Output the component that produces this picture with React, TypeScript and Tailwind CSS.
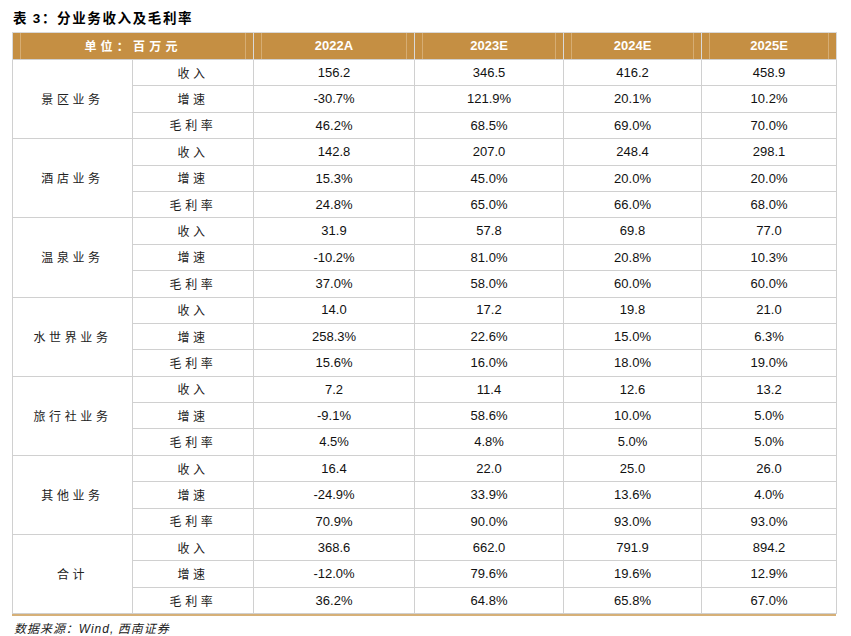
const sections = [
    {
        name: "景区业务",
        rows: [
            ["156.2", "346.5", "416.2", "458.9"],
            ["-30.7%", "121.9%", "20.1%", "10.2%"],
            ["46.2%", "68.5%", "69.0%", "70.0%"],
        ],
    },
    {
        name: "酒店业务",
        rows: [
            ["142.8", "207.0", "248.4", "298.1"],
            ["15.3%", "45.0%", "20.0%", "20.0%"],
            ["24.8%", "65.0%", "66.0%", "68.0%"],
        ],
    },
    {
        name: "温泉业务",
        rows: [
            ["31.9", "57.8", "69.8", "77.0"],
            ["-10.2%", "81.0%", "20.8%", "10.3%"],
            ["37.0%", "58.0%", "60.0%", "60.0%"],
        ],
    },
    {
        name: "水世界业务",
        rows: [
            ["14.0", "17.2", "19.8", "21.0"],
            ["258.3%", "22.6%", "15.0%", "6.3%"],
            ["15.6%", "16.0%", "18.0%", "19.0%"],
        ],
    },
    {
        name: "旅行社业务",
        rows: [
            ["7.2", "11.4", "12.6", "13.2"],
            ["-9.1%", "58.6%", "10.0%", "5.0%"],
            ["4.5%", "4.8%", "5.0%", "5.0%"],
        ],
    },
    {
        name: "其他业务",
        rows: [
            ["16.4", "22.0", "25.0", "26.0"],
            ["-24.9%", "33.9%", "13.6%", "4.0%"],
            ["70.9%", "90.0%", "93.0%", "93.0%"],
        ],
    },
    {
        name: "合计",
        rows: [
            ["368.6", "662.0", "791.9", "894.2"],
            ["-12.0%", "79.6%", "19.6%", "12.9%"],
            ["36.2%", "64.8%", "65.8%", "67.0%"],
        ],
    },
];

const metrics = ["收入", "增速", "毛利率"];
const years = ["2022A", "2023E", "2024E", "2025E"];

const cjk = "font-['Noto_Sans_CJK_SC',sans-serif]";
const latin = "font-['Liberation_Sans',Arial,sans-serif]";

const HeadCell = ({ children, span }: { children: React.ReactNode; span?: number }) => (
    <th colSpan={span} className="h-[27px] p-0 border-x border-[#d9d9d9] bg-[#c58f43]">
        <div className="h-full mx-[7px] border-x border-[#d6ad73] flex items-center justify-center text-white font-bold text-[13px]">
            {children}
        </div>
    </th>
);

export default function App() {
    return (
        <div className="w-[851px] h-[636px] overflow-hidden bg-white pt-[8px] pl-[12px]">
            <div className={`${cjk} font-bold text-[13.5px] tracking-[0.12em] text-black leading-[18px] pl-[1px]`}>
                表 <span className={latin}>3</span>：分业务收入及毛利率
            </div>
            <table className="mt-[4px] border-collapse table-fixed w-[824px]">
                <colgroup>
                    <col className="w-[120px]" />
                    <col className="w-[121px]" />
                    <col className="w-[161px]" />
                    <col className="w-[149px]" />
                    <col className="w-[138px]" />
                    <col className="w-[135px]" />
                </colgroup>
                <thead>
                    <tr className="border-t border-[#d9d9d9]">
                        <HeadCell span={2}>
                            <span className={`${cjk} tracking-[0.35em] text-[12px]`}>单位：百万元</span>
                        </HeadCell>
                        {years.map((y) => (
                            <HeadCell key={y}>
                                <span className={latin}>{y}</span>
                            </HeadCell>
                        ))}
                    </tr>
                </thead>
                <tbody>
                    {sections.map((s) =>
                        s.rows.map((r, i) => (
                            <tr key={s.name + i} className="h-[26.4px]">
                                {i === 0 && (
                                    <td
                                        rowSpan={3}
                                        className={`${cjk} border border-[#d0d0d0] text-center text-[12px] tracking-[0.3em] text-[#222]`}
                                    >
                                        {s.name}
                                    </td>
                                )}
                                <td className={`${cjk} border border-[#d0d0d0] text-center text-[12px] tracking-[0.3em] text-[#222] p-0`}>
                                    {metrics[i]}
                                </td>
                                {r.map((v, j) => (
                                    <td
                                        key={j}
                                        className={`${latin} border border-[#d0d0d0] text-center text-[13px] text-[#111] p-0`}
                                    >
                                        {v}
                                    </td>
                                ))}
                            </tr>
                        ))
                    )}
                </tbody>
            </table>
            <div className="w-[824px] h-[2px] bg-[#d6b078]"></div>
            <div className={`${cjk} italic text-[12px] leading-[16px] tracking-[0.08em] text-[#222] mt-[4px] pl-[2px]`}>
                数据来源：<span className={latin}>Wind,</span> 西南证券
            </div>
        </div>
    );
}
